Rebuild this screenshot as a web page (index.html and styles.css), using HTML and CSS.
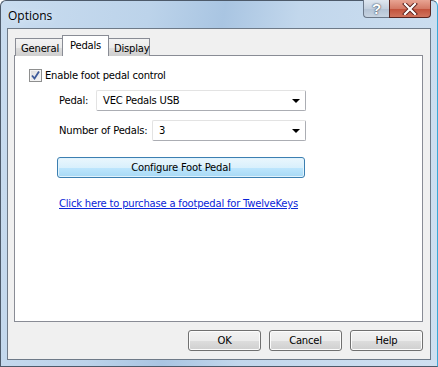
FILE: index.html
```html
<!DOCTYPE html>
<html>
	<head>
		<meta charset="utf-8">
		<title>Options</title>
		<link rel="stylesheet" href="styles.css">
	</head>
	<body>
		<div class="window">
			<div class="titlebar">
				<span class="title">Options</span>
				<div class="caption-btns">
					<div class="cap-help">?</div>
					<div class="cap-close">
						<svg width="16" height="12" viewBox="0 0 16 12">
							<path d="M3 1 L13 11 M13 1 L3 11" stroke="#5a1f1a" stroke-width="4" stroke-linecap="square"/>
							<path d="M3 1 L13 11 M13 1 L3 11" stroke="#ffffff" stroke-width="2.2" stroke-linecap="square"/>
						</svg>
					</div>
				</div>
			</div>
			<div class="client">
				<div class="tabs">
					<div class="tab">General</div>
					<div class="tab active">Pedals</div>
					<div class="tab">Display</div>
				</div>
				<div class="panel">
					<label class="check-row">
						<span class="checkbox">
							<svg width="11" height="11" viewBox="0 0 11 11">
								<path d="M2 5.5 L4.5 8.5 L9 1.5" fill="none" stroke="#3d5a9a" stroke-width="1.8"/>
							</svg>
						</span>
						Enable foot pedal control
					</label>
					<div class="field-row first">
						<span class="field-label short">Pedal:</span>
						<div class="combo wide">VEC Pedals USB<span class="arrow"></span></div>
					</div>
					<div class="field-row">
						<span class="field-label long">Number of Pedals:</span>
						<div class="combo narrow">3<span class="arrow"></span></div>
					</div>
					<div class="configure">Configure Foot Pedal</div>
					<a class="link" href="#">Click here to purchase a footpedal for TwelveKeys</a>
				</div>
				<div class="buttons">
					<div class="btn">OK</div>
					<div class="btn">Cancel</div>
					<div class="btn">Help</div>
				</div>
			</div>
		</div>
	</body>
</html>
```
FILE: styles.css
```css
*{
	margin: 0;
	padding: 0;
	box-sizing: border-box;
}
body{
	width: 438px;
	height: 367px;
	overflow: hidden;
	font-family: "DejaVu Sans", "Liberation Sans", sans-serif;
	font-size: 10px;
	letter-spacing: -0.2px;
	color: #000;
	background: #fff;
}
.window{
	width: 438px;
	height: 367px;
	border: 1px solid #4d5a6a;
	border-right-color: #3aa9d8;
	border-radius: 6px 6px 0 0;
	background: linear-gradient(100deg, #c9dcef 0%, #bcd3ea 30%, #a9c5e2 45%, #c2d7ec 60%, #cfe0f1 100%);
	display: flex;
	flex-direction: column;
	padding: 0 6px 6px 6px;
}
.titlebar{
	height: 27px;
	display: flex;
	justify-content: space-between;
	align-items: flex-start;
}
.title{
	font-family: "Open Sans", "Noto Sans", sans-serif;
	font-size: 12px;
	letter-spacing: 0;
	margin: 6px 0 0 1px;
	text-shadow: 0 0 6px #e6f0fa;
}
.caption-btns{
	display: flex;
	margin-top: -1px;
}
.cap-help{
	width: 26px;
	height: 18px;
	border: 1px solid #6b7889;
	border-top: none;
	border-right: none;
	border-radius: 0 0 0 4px;
	background: linear-gradient(#dfe7f0, #c4d0de 50%, #b3c2d4 51%, #c8d4e2);
	color: #fff;
	font-family: "Liberation Sans", sans-serif;
	font-size: 15px;
	font-weight: bold;
	text-align: center;
	line-height: 17px;
	text-shadow: 0 0 2px #3c4a5c, 0 0 1px #3c4a5c;
}
.cap-close{
	width: 42px;
	height: 18px;
	border: 1px solid #5a2520;
	border-top: none;
	border-radius: 0 0 4px 0;
	background: linear-gradient(#e8a493, #d47a66 50%, #c1503a 51%, #d0735d);
	display: flex;
	justify-content: center;
	align-items: center;
}
.client{
	flex: 1;
	border: 1px solid #6e7a88;
	background: #f0f0f0;
	padding: 6px 7px 8px 6px;
	display: flex;
	flex-direction: column;
}
.tabs{
	display: flex;
	align-items: flex-end;
	height: 21px;
	padding-left: 1px;
	position: relative;
	z-index: 1;
}
.tab{
	height: 18px;
	border: 1px solid #898c95;
	border-bottom: none;
	background: linear-gradient(#f3f3f3, #ebebeb 50%, #dddddd 51%, #cfcfcf);
	padding: 3px 5px 0 5px;
	line-height: 13px;
}
.tab:first-child{
	width: 48px;
}
.tab:last-child{
	width: 42px;
	margin-left: 0;
}
.tab.active{
	width: 47px;
	height: 21px;
	background: #fff;
	padding: 3px 0 0 0;
	text-align: center;
	margin-left: -1px;
	margin-right: -1px;
}
.panel{
	height: 267px;
	margin-top: -1px;
	border: 1px solid #898c95;
	background: #fff;
	padding: 13px 0 0 14px;
	display: flex;
	flex-direction: column;
	align-items: flex-start;
}
.check-row{
	display: flex;
	align-items: center;
	height: 13px;
	gap: 3px;
}
.checkbox{
	width: 13px;
	height: 13px;
	border: 1px solid #8e8f8f;
	background: linear-gradient(135deg, #dcdcdc, #f8f8f8);
	display: flex;
	justify-content: center;
	align-items: center;
	box-shadow: inset 0 0 0 1px #f4f4f4;
}
.field-row{
	display: flex;
	align-items: center;
	margin: 9px 0 0 30px;
	height: 21px;
}
.field-row.first{
	margin-top: 8px;
}
.field-label.short{
	width: 37px;
}
.field-label.long{
	width: 93px;
}
.combo{
	height: 21px;
	border: 1px solid #abadb3;
	border-top-color: #e3e3e3;
	border-left-color: #e3e3e3;
	border-radius: 2px;
	padding: 0 0 0 6px;
	line-height: 19px;
	position: relative;
	background: #fff;
}
.combo.wide{
	width: 210px;
}
.combo.narrow{
	width: 154px;
}
.arrow{
	position: absolute;
	right: 5px;
	top: 8px;
	border-left: 4px solid transparent;
	border-right: 4px solid transparent;
	border-top: 4px solid #000;
}
.configure{
	margin: 16px 0 0 28px;
	width: 248px;
	height: 21px;
	border: 1px solid #3c7fb1;
	border-radius: 3px;
	background: linear-gradient(#eaf6fd, #d9f0fc 50%, #bee6fd 51%, #a7d9f5);
	box-shadow: inset 0 0 0 1px #e0f3fd;
	text-align: center;
	line-height: 19px;
}
.link{
	margin: 19px 0 0 30px;
	color: #0a24d8;
	text-decoration: underline;
	line-height: 14px;
}
.buttons{
	display: flex;
	justify-content: flex-end;
	gap: 8px;
	margin-top: 8px;
}
.btn{
	width: 73px;
	height: 21px;
	border: 1px solid #707070;
	border-radius: 3px;
	background: linear-gradient(#f2f2f2, #ebebeb 50%, #dddddd 51%, #cfcfcf);
	box-shadow: inset 0 0 0 1px #fcfcfc;
	text-align: center;
	line-height: 19px;
}
```
